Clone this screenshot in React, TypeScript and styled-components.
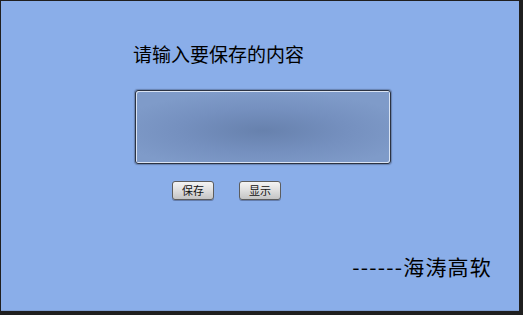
import React from "react";
import styled, { createGlobalStyle } from "styled-components";

const Global = createGlobalStyle`
  html, body { margin: 0; padding: 0; background: #1f1f1f; }
  body { font-family: "Noto Sans CJK SC", "Noto Sans", sans-serif; }
`;

const Frame = styled.div`
  width: 523px;
  height: 315px;
  box-sizing: border-box;
  background: #1f1f1f;
  padding: 1px 4px 4px 1px;
`;

const Panel = styled.div`
  height: 100%;
  background: #8aaee9;
  display: flex;
  flex-direction: column;
  box-sizing: border-box;
  padding: 0 27px 0 0;
  border-bottom: 1px solid #7e9dd0;
`;

const Label = styled.div`
  margin: 43px 0 0 132px;
  font-size: 19px;
  line-height: 20px;
  color: #000;
`;

const Input = styled.textarea`
  margin: 26px 0 0 134px;
  width: 256px;
  height: 74px;
  box-sizing: border-box;
  resize: none;
  border: 1px solid #2c3342;
  border-radius: 3px;
  outline: none;
  background: radial-gradient(ellipse 60% 55% at 50% 55%, #6781ad 0%, #7590bf 55%, #7f9bc9 100%);
  box-shadow: inset 1px 1px 0 #d9e3f3, inset -1px -1px 0 #d9e3f3, 0 0 1px 1px rgba(40, 50, 70, 0.35);
`;

const ButtonRow = styled.div`
  display: flex;
  gap: 25px;
  margin: 17px 0 0 171px;
`;

const Button = styled.button<{ $w: number }>`
  width: ${(p) => p.$w}px;
  height: 19px;
  box-sizing: border-box;
  padding: 0;
  border: 1px solid #5d5d5d;
  border-radius: 3px;
  background: linear-gradient(#f4f4f4 0%, #dedede 50%, #c4c4c4 100%);
  font-family: "Noto Sans CJK SC", sans-serif;
  font-size: 11px;
  line-height: 17px;
  color: #111;
  box-shadow: 0 1px 0 rgba(40, 50, 80, 0.4);
`;

const Signature = styled.div`
  margin-top: auto;
  margin-bottom: 33px;
  align-self: flex-end;
  font-size: 21px;
  line-height: 22px;
  color: #000;
  letter-spacing: 1.2px;
`;

export default function App() {
  return (
    <>
      <Global />
      <Frame>
        <Panel>
          <Label>请输入要保存的内容</Label>
          <Input readOnly />
          <ButtonRow>
            <Button $w={42}>保存</Button>
            <Button $w={42}>显示</Button>
          </ButtonRow>
          <Signature>------海涛高软</Signature>
        </Panel>
      </Frame>
    </>
  );
}
